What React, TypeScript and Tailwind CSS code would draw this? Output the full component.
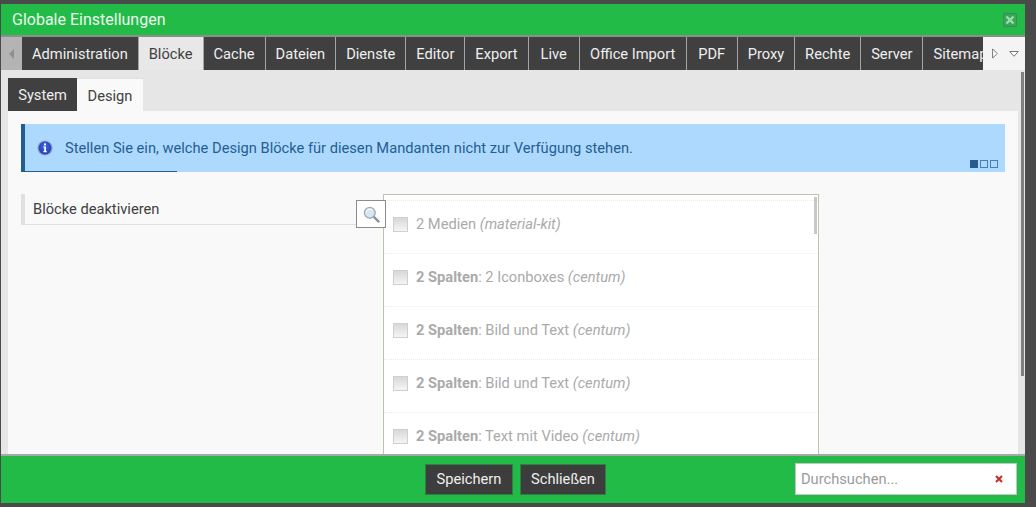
const TABS = [
  { label: "Administration", width: "" },
  { label: "Blöcke", width: "" },
  { label: "Cache", width: "" },
  { label: "Dateien", width: "" },
  { label: "Dienste", width: "" },
  { label: "Editor", width: "" },
  { label: "Export", width: "" },
  { label: "Live", width: "w-[50px]" },
  { label: "Office Import", width: "w-[106px]" },
  { label: "PDF", width: "w-[50px]" },
  { label: "Proxy", width: "" },
  { label: "Rechte", width: "w-[65px]" },
  { label: "Server", width: "" },
  { label: "Sitemap", width: "" },
];

const ITEMS = [
  { bold: "", text: "2 Medien ", theme: "(material-kit)" },
  { bold: "2 Spalten", text: ": 2 Iconboxes ", theme: "(centum)" },
  { bold: "2 Spalten", text: ": Bild und Text ", theme: "(centum)" },
  { bold: "2 Spalten", text: ": Bild und Text ", theme: "(centum)" },
  { bold: "2 Spalten", text: ": Text mit Video ", theme: "(centum)" },
];

function InfoIcon() {
  return (
    <svg width="16" height="16" viewBox="0 0 16 16" className="shrink-0">
      <defs>
        <radialGradient id="info" cx="50%" cy="40%" r="65%">
          <stop offset="0%" stopColor="#3f66e0" />
          <stop offset="100%" stopColor="#1c35b5" />
        </radialGradient>
      </defs>
      <circle cx="8" cy="8" r="7" fill="url(#info)" stroke="#8f9cb0" strokeWidth="1.2" />
      <rect x="7" y="3.4" width="2" height="2" fill="#fff" />
      <path d="M6.2 6.6H9v4.6h1v1H6.2v-1h1V7.6h-1z" fill="#fff" />
    </svg>
  );
}

function GlassIcon() {
  return (
    <svg width="17" height="17" viewBox="0 0 17 17">
      <path d="M10.5 10.5l5 5" stroke="#8a8f94" strokeWidth="2.4" strokeLinecap="round" />
      <circle cx="6.8" cy="6.8" r="5.4" fill="#d6e6f2" stroke="#a4adb5" strokeWidth="1.4" />
      <path d="M3.4 6a3.6 3.6 0 0 1 6.4-1.2" fill="none" stroke="#fff" strokeWidth="1" />
    </svg>
  );
}

export default function App() {
  return (
    <div className="h-[507px] w-[1036px] overflow-hidden bg-[#4a4a4a] pl-px pt-[4px] font-['Roboto',sans-serif]">
      <div className="flex h-[499px] w-[1024px] flex-col overflow-hidden">
        <header className="flex h-[31px] shrink-0 items-center justify-between bg-[#22bb47] pl-[11px] pr-[8px] text-[16px] text-[#eef7f0]">
          <span>Globale Einstellungen</span>
          <div className="flex h-[14px] w-[14px] items-center justify-center rounded-[2px] border border-[#358f4e] bg-[#3fa35b]">
            <svg width="10" height="10" viewBox="0 0 10 10">
              <path d="M1.5 1.5l7 7M8.5 1.5l-7 7" stroke="#93e2a9" strokeWidth="2.4" />
            </svg>
          </div>
        </header>

        <div className="flex h-[35px] shrink-0 border-t-2 border-[#8d8d8d] bg-[#f4f4f4]">
          <div className="flex w-[21px] shrink-0 items-center justify-center bg-[#b4b4b4]">
            <div className="h-0 w-0 border-y-[5px] border-r-[5px] border-y-transparent border-r-[#8f8f8f]" />
          </div>
          <nav className="flex w-[961px] shrink-0 gap-px overflow-hidden bg-[#a5a5a5]">
            {TABS.map((t) => (
              <div
                key={t.label}
                className={`flex shrink-0 items-center justify-center px-[10px] pt-px text-[14.667px] ${t.width} ${
                  t.label === "Blöcke" ? "bg-[#e8e8e8] text-[#404040]" : "bg-[#404040] text-[#efefef]"
                }`}
              >
                {t.label}
              </div>
            ))}
          </nav>
          <div className="flex flex-1 items-center gap-[11px] pl-[9px]">
            <svg width="6" height="11" viewBox="0 0 6 11">
              <path d="M.6.9v9.2L5.2 5.5z" fill="#fff" stroke="#777" />
            </svg>
            <svg width="10" height="6" viewBox="0 0 10 6">
              <path d="M.7.5h8.6L5 5.3z" fill="#fff" stroke="#777" />
            </svg>
          </div>
        </div>

        <main className="flex min-h-0 flex-1 bg-[#e6e6e6] pl-[7px] pt-[8px]">
          <div className="flex w-[1010px] shrink-0 flex-col">
            <div className="flex h-[33px] shrink-0 text-[14.667px]">
              <div className="flex w-[69px] items-center justify-center bg-[#404040] pt-px text-[#efefef]">System</div>
              <div className="flex w-[66px] items-center justify-center border-t border-[#e0e0e0] bg-[#f9f9f9] pt-px text-[#404040]">
                Design
              </div>
            </div>
            <div className="min-h-0 flex-1 overflow-hidden bg-[#f9f9f9] px-[13px] pt-[13px]">
              <div className="relative flex h-[48px] w-[984px] items-center border-l-4 border-[#245e8f] bg-[#aed9ff] pl-[12px] text-[14.667px] text-[#245e8f]">
                <InfoIcon />
                <span className="ml-[12px]">
                  Stellen Sie ein, welche Design Blöcke für diesen Mandanten nicht zur Verfügung stehen.
                </span>
                <div className="absolute bottom-0 left-0 h-px w-[152px] bg-[#245e8f]" />
                <div className="absolute bottom-[4px] right-[7px] flex gap-[2px]">
                  <div className="h-[8px] w-[8px] bg-[#245e8f]" />
                  <div className="h-[8px] w-[8px] border border-[#4a80ab]" />
                  <div className="h-[8px] w-[8px] border border-[#4a80ab]" />
                </div>
              </div>

              <div className="mt-[22px] flex items-start">
                <div className="flex h-[31px] w-[335px] shrink-0 items-center border-b border-l-4 border-[#e0e0e0] pl-[8px] text-[14.667px] text-[#404040]">
                  Blöcke deaktivieren
                </div>
                <div className="relative z-10 mt-[6px] flex h-[28px] w-[30px] shrink-0 items-center justify-center border border-[#8c8c8c] bg-white">
                  <GlassIcon />
                </div>
                <div className="-ml-[3px] h-[300px] w-[436px] shrink-0 overflow-hidden border border-[#b8c8ac] bg-white pt-[5px]">
                  <div className="relative">
                    <div className="absolute right-[1px] top-[-3px] h-[37px] w-[3px] bg-[#c8c8c8]" />
                    {ITEMS.map((item, i) => (
                      <div
                        key={i}
                        className="flex h-[53px] items-center gap-[8px] border-t border-dotted border-[#ececec] pb-[6px] pl-[9px] text-[14.667px] text-[#aaaaaa]"
                      >
                        <div className="h-[15px] w-[15px] shrink-0 border border-[#cfcfcf] bg-gradient-to-b from-[#d8d8d8] to-[#f5f5f5]" />
                        <span>
                          {item.bold && <b className="font-bold">{item.bold}</b>}
                          {item.text}
                          <i>{item.theme}</i>
                        </span>
                      </div>
                    ))}
                  </div>
                </div>
              </div>
            </div>
          </div>
          <div className="ml-[3px] mt-[-6px] h-[304px] w-[3px] shrink-0 bg-[#808080]" />
        </main>

        <footer className="flex h-[49px] shrink-0 items-center border-t-2 border-[#a8a8a8] bg-[#22bb47] pl-[424px] pr-[8px] text-[14.667px]">
          <button className="h-[31px] w-[88px] border border-[#2f7f44] bg-[#3d3d3d] pb-px text-[#efefef]">Speichern</button>
          <button className="ml-[7px] h-[31px] w-[86px] border border-[#2f7f44] bg-[#3d3d3d] pb-px text-[#efefef]">Schließen</button>
          <div className="-mt-px ml-auto flex h-[32px] w-[222px] items-center justify-between border border-[#c4c4c4] bg-white pl-[5px] pr-[13px] text-[#9a9a9a]">
            <span>Durchsuchen...</span>
            <svg width="8" height="8" viewBox="0 0 8 8">
              <path d="M1 1l6 6M7 1L1 7" stroke="#c62a2a" strokeWidth="2" />
            </svg>
          </div>
        </footer>
      </div>
    </div>
  );
}
